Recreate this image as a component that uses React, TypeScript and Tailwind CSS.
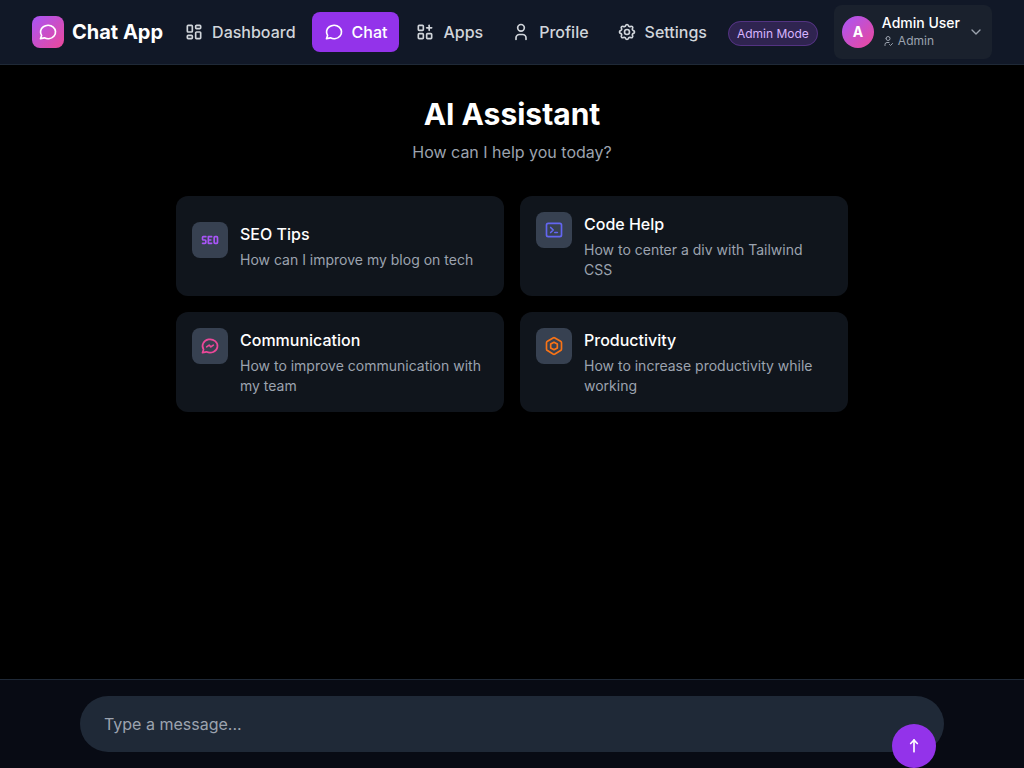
import { useState } from "react";
import type { ComponentType, SVGProps } from "react";
import {
  TbApps,
  TbArrowNarrowUp,
  TbBrandMessenger,
  TbChevronDown,
  TbLayoutDashboard,
  TbMessageCircle,
  TbSeo,
  TbSettings,
  TbTerminal2,
  TbUser,
  TbUserCheck,
} from "react-icons/tb";

type Icon = ComponentType<SVGProps<SVGSVGElement>>;
type NavItem = { label: string; icon: Icon; active?: boolean };
type Suggestion = { title: string; text: string; icon: Icon; color: string };

function NestedHexagon(props: SVGProps<SVGSVGElement>) {
  return (
    <svg
      viewBox="0 0 24 24"
      fill="none"
      stroke="currentColor"
      strokeWidth="2"
      strokeLinecap="round"
      strokeLinejoin="round"
      {...props}
    >
      <path d="M19.9 6.3c.7.4 1.1 1.1 1.1 1.9v7.3c0 .8-.4 1.6-1.1 2l-6.8 4.2a2.3 2.3 0 0 1-2.2 0l-6.8-4.2A2.2 2.2 0 0 1 3 15.500V8.200c0-.8.400-1.500 1.100-1.900l6.800-4a2.300 2.300 0 0 1 2.200 0z" />
      <path d="M12 7.500l4 2.200v4.600l-4 2.200l-4-2.200V9.700z" />
    </svg>
  );
}

const navItems: NavItem[] = [
  { label: "Dashboard", icon: TbLayoutDashboard },
  { label: "Chat", icon: TbMessageCircle, active: true },
  { label: "Apps", icon: TbApps },
  { label: "Profile", icon: TbUser },
  { label: "Settings", icon: TbSettings },
];

const suggestions: Suggestion[] = [
  { title: "SEO Tips", text: "How can I improve my blog on tech", icon: TbSeo, color: "text-[#a855f7]" },
  { title: "Code Help", text: "How to center a div with Tailwind CSS", icon: TbTerminal2, color: "text-[#6366f1]" },
  { title: "Communication", text: "How to improve communication with my team", icon: TbBrandMessenger, color: "text-[#ec4899]" },
  { title: "Productivity", text: "How to increase productivity while working", icon: NestedHexagon, color: "text-[#f97316]" },
];

function NavLink({ label, icon: Icon, active }: NavItem) {
  return (
    <a
      href={`#${label.toLowerCase()}`}
      aria-current={active ? "page" : undefined}
      className={`flex h-10 items-center gap-2 rounded-lg px-3 font-medium ${
        active ? "bg-[#9333ea] text-white" : "text-[#d1d5db]"
      }`}
    >
      <Icon className="size-5 shrink-0" aria-hidden="true" />
      {label}
    </a>
  );
}

function Header() {
  return (
    <header className="border-b border-[#1f2937] bg-[#111827]">
      <div className="flex h-16 items-center justify-between px-8">
        <a href="#home" className="flex shrink-0 items-center gap-2">
          <span className="flex size-8 items-center justify-center rounded-lg bg-linear-to-br/srgb from-[#a855f7] to-[#ec4899] text-white">
            <TbMessageCircle className="size-5" aria-hidden="true" />
          </span>
          <span className="text-xl font-bold text-white">Chat App</span>
        </a>
        <nav className="flex items-center gap-1" aria-label="Main">
          {navItems.map((item) => (
            <NavLink key={item.label} {...item} />
          ))}
        </nav>
        <div className="flex shrink-0 items-center gap-4">
          <div>
            <span className="rounded-full border border-[#a855f7]/30 bg-[#a855f7]/20 px-2 py-1 text-xs text-[#d8b4fe]">
              Admin Mode
            </span>
          </div>
          <button type="button" className="flex items-center gap-2 rounded-lg bg-[#1a212d] p-2 text-left">
            <span className="flex size-8 items-center justify-center rounded-full bg-linear-to-br/srgb from-[#a855f7] to-[#ec4899] text-sm font-bold text-white">
              A
            </span>
            <span className="flex flex-col">
              <span className="text-sm font-medium text-white">Admin User</span>
              <span className="flex items-center gap-1 pb-0.5 text-xs text-[#9ca3af]">
                <TbUserCheck className="size-3" aria-hidden="true" />
                Admin
              </span>
            </span>
            <TbChevronDown className="size-4 text-[#9ca3af]" aria-hidden="true" />
          </button>
        </div>
      </div>
    </header>
  );
}

function SuggestionCard({ title, text, icon: Icon, color }: Suggestion) {
  return (
    <button type="button" className="flex items-center rounded-xl bg-[#10151c] p-4 text-left">
      <span className="flex items-start gap-3">
        <span className={`flex size-9 shrink-0 items-center justify-center rounded-lg bg-[#374151] ${color}`}>
          <Icon className="size-5" aria-hidden="true" />
        </span>
        <span className="flex flex-col gap-1">
          <span className="font-medium text-white">{title}</span>
          <span className="text-sm text-[#9ca3af]">{text}</span>
        </span>
      </span>
    </button>
  );
}

export default function App() {
  const [message, setMessage] = useState("");

  return (
    <div className="flex min-h-screen flex-col bg-black font-['Inter',sans-serif]">
      <Header />
      <main className="flex grow flex-col items-center px-4 pt-[31px]">
        <h1 className="text-3xl font-bold text-white">AI Assistant</h1>
        <p className="mt-2 text-[#9ca3af]">How can I help you today?</p>
        <div className="mt-8 grid w-full max-w-2xl grid-cols-2 gap-4">
          {suggestions.map((item) => (
            <SuggestionCard key={item.title} {...item} />
          ))}
        </div>
      </main>
      <footer className="border-t border-[#1f2937] bg-[#080b14] px-4 py-4">
        <form className="relative mx-auto max-w-[864px]" onSubmit={(event) => event.preventDefault()}>
          <input
            type="text"
            aria-label="Message"
            placeholder="Type a message..."
            value={message}
            onChange={(event) => setMessage(event.target.value)}
            className="block h-14 w-full rounded-full bg-[#1f2937] pr-16 pl-6 text-white outline-none placeholder:text-[#9ca3af]"
          />
          <button
            type="submit"
            aria-label="Send message"
            className="absolute top-7 right-2 flex size-11 items-center justify-center rounded-full bg-[#9333ea] text-white"
          >
            <TbArrowNarrowUp className="size-5" aria-hidden="true" />
          </button>
        </form>
      </footer>
    </div>
  );
}
